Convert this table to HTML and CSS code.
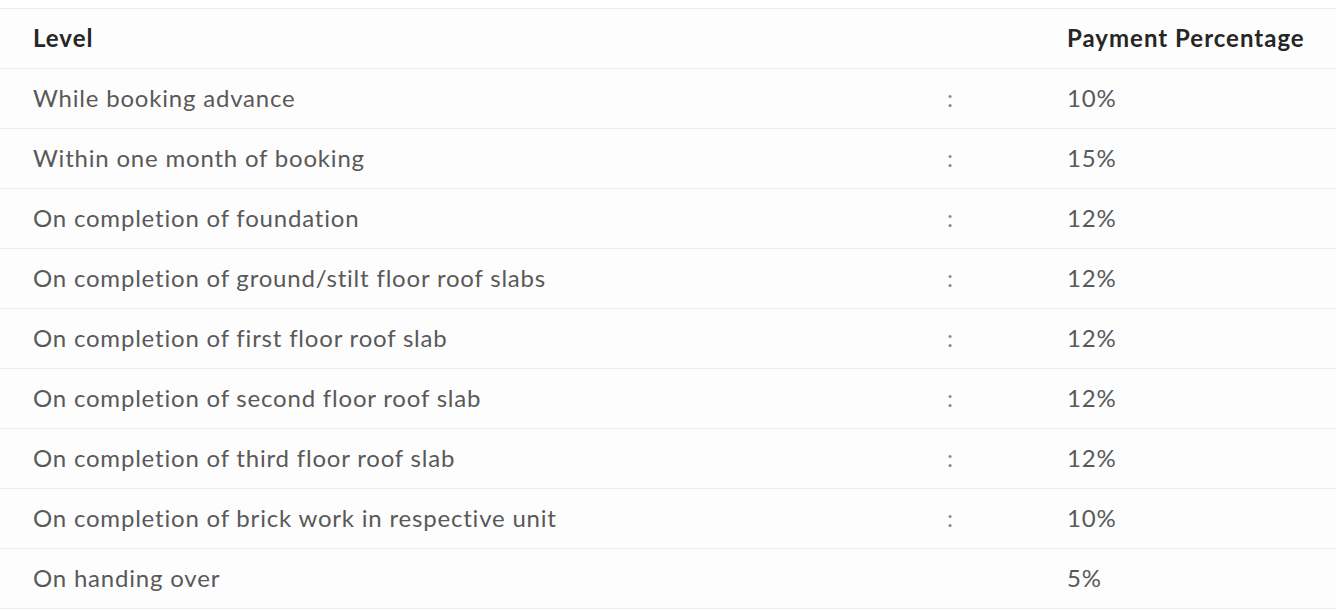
FILE: index.html
```html
<!DOCTYPE html>
<html>
<head>
<meta charset="utf-8">
<link rel="stylesheet" href="styles.css">
</head>
<body>
<table class="plan">
  <colgroup>
    <col class="c-level"><col class="c-sep"><col class="c-pct">
  </colgroup>
  <thead>
    <tr><th class="level">Level</th><th></th><th class="pct">Payment Percentage</th></tr>
  </thead>
  <tbody>
    <tr><td class="level">While booking advance</td><td class="sep">:</td><td class="pct">10%</td></tr>
    <tr><td class="level">Within one month of booking</td><td class="sep">:</td><td class="pct">15%</td></tr>
    <tr><td class="level">On completion of foundation</td><td class="sep">:</td><td class="pct">12%</td></tr>
    <tr><td class="level">On completion of ground/stilt floor roof slabs</td><td class="sep">:</td><td class="pct">12%</td></tr>
    <tr><td class="level">On completion of first floor roof slab</td><td class="sep">:</td><td class="pct">12%</td></tr>
    <tr><td class="level">On completion of second floor roof slab</td><td class="sep">:</td><td class="pct">12%</td></tr>
    <tr><td class="level">On completion of third floor roof slab</td><td class="sep">:</td><td class="pct">12%</td></tr>
    <tr><td class="level">On completion of brick work in respective unit</td><td class="sep">:</td><td class="pct">10%</td></tr>
    <tr><td class="level">On handing over</td><td class="sep"></td><td class="pct">5%</td></tr>
  </tbody>
</table>
</body>
</html>
```

FILE: styles.css
```css
html, body {
  margin: 0;
  padding: 0;
  background: #ffffff;
}
body {
  padding-top: 8px;
  font-family: "Lato", "Open Sans", sans-serif;
}
.plan {
  width: 1336px;
  border-collapse: collapse;
  table-layout: fixed;
  background: #fdfdfd;
}
.c-level { width: 945px; }
.c-sep { width: 122px; }
.plan th, .plan td {
  height: 58px;
  padding: 0 0 1px 0;
  border-top: 1px solid #ececec;
  border-bottom: 1px solid #ececec;
  vertical-align: middle;
  text-align: left;
  white-space: nowrap;
  line-height: 28px;
}
.plan th {
  font-size: 24px;
  font-weight: 700;
  letter-spacing: 1px;
  color: #262626;
}
.plan td {
  font-size: 24px;
  font-weight: 400;
  letter-spacing: 0.8px;
  color: #595959;
}
.plan .level {
  padding-left: 33px;
}
.plan .sep {
  padding-left: 2px;
  color: #8a8a8a;
}
```
